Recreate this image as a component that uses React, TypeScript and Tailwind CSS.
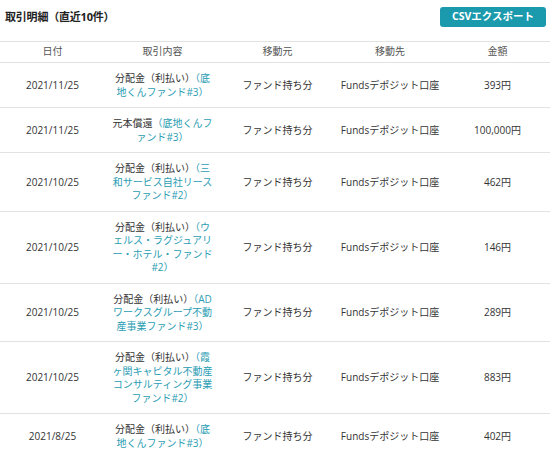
type Row = {
  date: string;
  kind: string;
  fund: string;
  amount: string;
};

const rows: Row[] = [
  { date: "2021/11/25", kind: "分配金（利払い）", fund: "（底地くんファンド#3）", amount: "393円" },
  { date: "2021/11/25", kind: "元本償還", fund: "（底地くんファンド#3）", amount: "100,000円" },
  { date: "2021/10/25", kind: "分配金（利払い）", fund: "（三和サービス自社リースファンド#2）", amount: "462円" },
  { date: "2021/10/25", kind: "分配金（利払い）", fund: "（ウェルス・ラグジュアリー・ホテル・ファンド#2）", amount: "146円" },
  { date: "2021/10/25", kind: "分配金（利払い）", fund: "（ADワークスグループ不動産事業ファンド#3）", amount: "289円" },
  { date: "2021/10/25", kind: "分配金（利払い）", fund: "（霞ヶ関キャピタル不動産コンサルティング事業ファンド#2）", amount: "883円" },
  { date: "2021/8/25", kind: "分配金（利払い）", fund: "（底地くんファンド#3）", amount: "402円" },
];

const font = { fontFamily: '"Open Sans", "Noto Sans CJK JP", sans-serif' };

export default function App() {
  return (
    <div className="w-[550px] h-[458px] overflow-hidden bg-white text-[#333]" style={font}>
      <div className="flex items-center justify-between pt-[7px] pl-[5px] pr-[4px] mb-[14px]">
        <h2 className="text-[11px] font-bold text-[#222] tracking-[-0.2px]">取引明細（直近10件）</h2>
        <button className="w-[106px] h-[20px] rounded-[3px] bg-[#1b9aad] text-white text-[10.5px] font-bold">
          CSVエクスポート
        </button>
      </div>

      <table className="w-full table-fixed border-collapse text-[10px] leading-[13.5px]">
        <colgroup>
          <col className="w-[105px]" />
          <col className="w-[115px]" />
          <col className="w-[115px]" />
          <col className="w-[110px]" />
          <col className="w-[105px]" />
        </colgroup>
        <thead>
          <tr className="border-y border-[#e2e2e2] text-[#555] h-[21px]">
            <th className="font-normal">日付</th>
            <th className="font-normal">取引内容</th>
            <th className="font-normal">移動元</th>
            <th className="font-normal">移動先</th>
            <th className="font-normal">金額</th>
          </tr>
        </thead>
        <tbody>
          {rows.map((r, i) => (
            <tr key={i} className="border-b border-[#e2e2e2] text-center">
              <td className="pt-[9px] pb-[8px]">{r.date}</td>
              <td className="pt-[9px] pb-[8px] px-[6px]">
                <div className="mx-auto w-[102px]">
                  {r.kind}
                  <span className="text-[#2a9db3]">{r.fund}</span>
                </div>
              </td>
              <td className="pt-[9px] pb-[8px]">ファンド持ち分</td>
              <td className="pt-[9px] pb-[8px]">Fundsデポジット口座</td>
              <td className="pt-[9px] pb-[8px]">{r.amount}</td>
            </tr>
          ))}
        </tbody>
      </table>
    </div>
  );
}
